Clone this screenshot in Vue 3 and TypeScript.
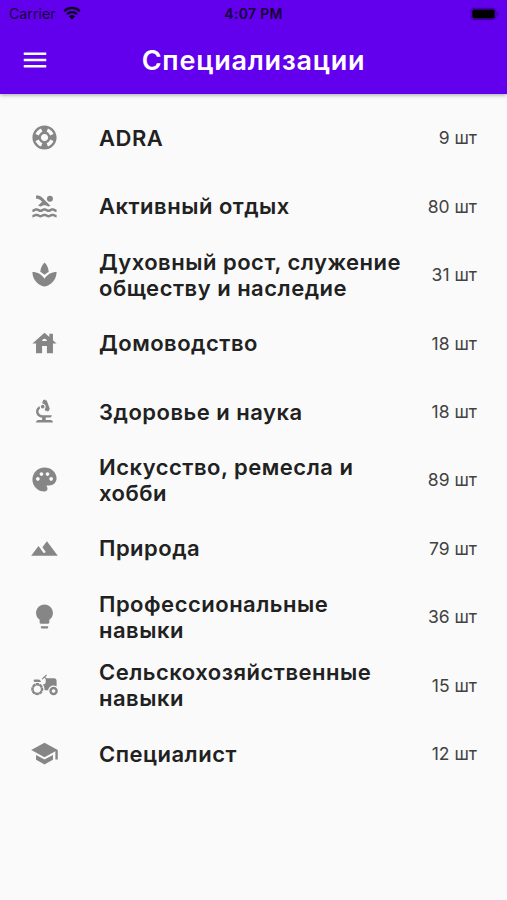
<script setup lang="ts">
interface Specialization {
  title: string
  count: number
  icon: string
}

const items: Specialization[] = [
  {
    title: 'ADRA',
    count: 9,
    icon: 'M12 2C6.48 2 2 6.48 2 12s4.48 10 10 10 10-4.48 10-10S17.52 2 12 2zm7.46 7.12l-2.78 1.15c-.51-1.36-1.58-2.44-2.95-2.94l1.15-2.78c2.1.8 3.77 2.47 4.58 4.57zM12 15c-1.66 0-3-1.34-3-3s1.34-3 3-3 3 1.34 3 3-1.34 3-3 3zM9.13 4.54l1.17 2.78c-1.38.5-2.47 1.59-2.98 2.97L4.54 9.13c.81-2.11 2.48-3.78 4.59-4.59zM4.54 14.87l2.78-1.15c.51 1.38 1.59 2.46 2.97 2.96l-1.17 2.78c-2.1-.81-3.77-2.48-4.58-4.59zm10.34 4.59l-1.15-2.78c1.37-.51 2.45-1.59 2.95-2.97l2.78 1.17c-.81 2.1-2.48 3.77-4.58 4.58z',
  },
  {
    title: 'Активный отдых',
    count: 80,
    icon: 'M22 21c-1.11 0-1.73-.37-2.18-.64-.37-.22-.6-.36-1.15-.36-.56 0-.78.13-1.15.36-.46.27-1.07.64-2.18.64s-1.73-.37-2.18-.64c-.37-.22-.6-.36-1.15-.36-.56 0-.78.13-1.15.36-.46.27-1.08.64-2.19.64-1.11 0-1.73-.37-2.18-.64-.37-.23-.6-.36-1.15-.36s-.78.13-1.15.36c-.46.27-1.08.64-2.19.64v-2c.56 0 .78-.13 1.15-.36.46-.27 1.08-.64 2.19-.64s1.73.37 2.18.64c.37.23.59.36 1.15.36.56 0 .78-.13 1.15-.36.46-.27 1.08-.64 2.19-.64 1.11 0 1.73.37 2.18.64.37.22.6.36 1.15.36s.78-.13 1.15-.36c.45-.27 1.07-.64 2.18-.64s1.73.37 2.18.64c.37.23.59.36 1.15.36v2zm0-4.5c-1.11 0-1.73-.37-2.18-.64-.37-.22-.6-.36-1.15-.36-.56 0-.78.13-1.15.36-.45.27-1.07.64-2.18.64s-1.73-.37-2.18-.64c-.37-.22-.6-.36-1.15-.36-.56 0-.78.13-1.15.36-.45.27-1.07.64-2.18.64s-1.73-.37-2.18-.64c-.37-.22-.6-.36-1.15-.36s-.78.13-1.15.36c-.47.27-1.09.64-2.2.64v-2c.56 0 .78-.13 1.15-.36.45-.27 1.07-.64 2.18-.64s1.73.37 2.18.64c.37.22.6.36 1.15.36.56 0 .78-.13 1.15-.36.45-.27 1.07-.64 2.18-.64s1.73.37 2.18.64c.37.22.6.36 1.15.36s.78-.13 1.15-.36c.45-.27 1.07-.64 2.18-.64s1.73.37 2.18.64c.37.22.6.36 1.15.36v2zM8.67 12c.56 0 .78-.13 1.15-.36.46-.27 1.08-.64 2.19-.64 1.11 0 1.73.37 2.18.64.37.22.6.36 1.15.36s.78-.13 1.15-.36c.12-.07.26-.15.41-.23L10.48 5C8.93 3.45 7.5 2.99 5 3v2.5c1.82-.01 2.89.39 4 1.5l1 1-3.25 3.25c.31.12.56.27.77.39.37.23.59.36 1.15.36zM19 5.5a2.5 2.5 0 1 1-5 0a2.5 2.5 0 1 1 5 0z',
  },
  {
    title: 'Духовный рост, служение обществу и наследие',
    count: 31,
    icon: 'M15.49 9.63c-.18-2.79-1.31-5.51-3.43-7.63-2.14 2.14-3.32 4.86-3.55 7.63 1.28.68 2.46 1.56 3.49 2.63 1.03-1.06 2.21-1.94 3.49-2.63zM12 15.45C9.85 12.17 6.18 10 2 10c0 5.32 3.36 9.82 8.03 11.49.63.23 1.29.4 1.97.51.68-.12 1.33-.29 1.97-.51C18.64 19.82 22 15.32 22 10c-4.18 0-7.85 2.17-10 5.45z',
  },
  {
    title: 'Домоводство',
    count: 18,
    icon: 'M19 9.3V4h-3v2.6L12 3 2 12h3v8h5v-6h4v6h5v-8h3l-3-2.7zm-9 .7c0-1.1.9-2 2-2s2 .9 2 2h-4z',
  },
  {
    title: 'Здоровье и наука',
    count: 18,
    icon: 'M7 19c-1.1 0-2 .9-2 2h14c0-1.1-.9-2-2-2h-4v-2h3c1.1 0 2-.9 2-2h-8c-1.66 0-3-1.34-3-3 0-1.09.59-2.04 1.46-2.56C8.17 9.03 8 8.54 8 8c0-.21.04-.42.09-.62C6.28 8.13 5 9.92 5 12c0 2.76 2.24 5 5 5v2H7zM10.56 5.51C11.91 5.54 13 6.64 13 8c0 .75-.33 1.41-.85 1.87l.59 1.62.94-.34.34.94 1.88-.68-.34-.94.94-.34-2.74-7.52-.94.34-.34-.94-1.88.68.34.94-.94.35.56 1.53zM12 8a1.5 1.5 0 1 1-3 0a1.5 1.5 0 1 1 3 0z',
  },
  {
    title: 'Искусство, ремесла и хобби',
    count: 89,
    icon: 'M12 2C6.49 2 2 6.49 2 12s4.49 10 10 10c1.38 0 2.5-1.12 2.5-2.5 0-.61-.23-1.2-.64-1.67-.08-.1-.13-.21-.13-.33 0-.28.22-.5.5-.5H16c3.31 0 6-2.69 6-6 0-4.96-4.49-9-10-9zm5.5 11c-.83 0-1.5-.67-1.5-1.5s.67-1.5 1.5-1.5 1.5.67 1.5 1.5-.67 1.5-1.5 1.5zm-3-4c-.83 0-1.5-.67-1.5-1.5S13.67 6 14.5 6s1.5.67 1.5 1.5S15.33 9 14.5 9zM5 11.5c0-.83.67-1.5 1.5-1.5s1.5.67 1.5 1.5S7.33 13 6.5 13 5 12.33 5 11.5zm6-4c0 .83-.67 1.5-1.5 1.5S8 8.33 8 7.5 8.67 6 9.5 6s1.5.67 1.5 1.5z',
  },
  {
    title: 'Природа',
    count: 79,
    icon: 'M14 6l-3.75 5 2.85 3.8-1.6 1.2C9.81 13.75 7 10 7 10l-6 8h22L14 6z',
  },
  {
    title: 'Профессиональные навыки',
    count: 36,
    icon: 'M9 21c0 .5.4 1 1 1h4c.6 0 1-.5 1-1v-1H9v1zm3-19C8.1 2 5 5.1 5 9c0 2.4 1.2 4.5 3 5.7V17c0 .5.4 1 1 1h6c.6 0 1-.5 1-1v-2.3c1.8-1.3 3-3.4 3-5.7 0-3.9-3.1-7-7-7z',
  },
  {
    title: 'Сельскохозяйственные навыки',
    count: 15,
    icon: 'M19.5 12c.93 0 1.78.28 2.5.76V8c0-1.1-.9-2-2-2h-6.29l-1.06-1.06 1.41-1.41-.71-.71-3.53 3.53.71.71 1.41-1.41L13 6.71V9c0 1.1-.9 2-2 2h-.54c.95 1.06 1.54 2.46 1.54 4 0 .34-.04.67-.09 1h3.14c.25-2.25 2.14-4 4.45-4zM19.5 13c-1.93 0-3.5 1.57-3.5 3.5s1.57 3.5 3.5 3.5 3.5-1.57 3.5-3.5-1.57-3.5-3.5-3.5zm0 5c-.83 0-1.5-.67-1.5-1.5s.67-1.5 1.5-1.5 1.5.67 1.5 1.5-.67 1.5-1.5 1.5zM4 9h5c0-1.1-.9-2-2-2H4c-.55 0-1 .45-1 1s.45 1 1 1zM9.83 13.82l-.18-.47L10.58 13c-.46-1.06-1.28-1.91-2.31-2.43l-.4.89-.46-.21.4-.9C7.26 10.13 6.64 10 6 10c-.53 0-1.04.11-1.52.26l.34.91-.47.18L4 10.42c-1.06.46-1.91 1.28-2.43 2.31l.89.4-.21.46-.9-.4C1.13 13.74 1 14.36 1 15c0 .53.11 1.04.26 1.52l.91-.34.18.47-.93.35c.46 1.06 1.28 1.91 2.31 2.43l.4-.89.46.21-.4.9c.57.22 1.17.35 1.81.35.53 0 1.04-.11 1.52-.26l-.34-.91.47-.18.35.93c1.06-.46 1.91-1.28 2.43-2.31l-.89-.4.21-.46.9.4c.22-.57.35-1.17.35-1.81 0-.53-.11-1.04-.26-1.52l-.91.34zM7.15 17.77c-1.53.63-3.29-.09-3.92-1.62-.63-1.53.09-3.29 1.62-3.92 1.53-.63 3.29.09 3.92 1.62.64 1.53-.09 3.28-1.62 3.92z',
  },
  {
    title: 'Специалист',
    count: 12,
    icon: 'M5 13.18v4L12 21l7-3.82v-4L12 17l-7-3.82zM12 3L1 9l11 6 9-4.91V17h2V9L12 3z',
  },
]
</script>

<template>
  <div class="screen">
    <header class="header">
      <div class="status">
        <div class="carrier">
          <span>Carrier</span>
          <svg class="wifi" viewBox="0 0 18 14">
            <path d="M1.2 5.1a11.2 11.2 0 0 1 15.6 0" />
            <path d="M4 8.1a7.2 7.2 0 0 1 10 0" />
            <path class="dot" d="M9 13.5L5.9 10.4a4.4 4.4 0 0 1 6.2 0z" />
          </svg>
        </div>
        <span class="time">4:07 PM</span>
        <svg class="battery" viewBox="0 0 30 14">
          <rect class="shell" x="1" y="1.3" width="25" height="11.4" rx="3" />
          <rect x="2.3" y="2.6" width="22.4" height="8.8" rx="1.6" />
          <path class="cap" d="M27.3 5v4c1.9-.7 1.9-3.3 0-4z" />
        </svg>
      </div>
      <div class="toolbar">
        <button class="menu" type="button">
          <svg viewBox="0 0 24 24"><path d="M3 18h18v-2H3v2zm0-5h18v-2H3v2zm0-7v2h18V6H3z" /></svg>
        </button>
        <h1 class="title">Специализации</h1>
      </div>
    </header>
    <ul class="list">
      <li v-for="item in items" :key="item.title" class="row">
        <svg class="icon" viewBox="0 0 24 24"><path :d="item.icon" /></svg>
        <span class="name">{{ item.title }}</span>
        <span class="count">{{ item.count }} шт</span>
      </li>
    </ul>
  </div>
</template>

<style>
body {
  background: #fafafa;
}
</style>

<style scoped>
.screen {
  min-height: 900px;
  background: #fafafa;
  font-family: Inter, "Liberation Sans", sans-serif;
  color: #212121;
}
.header {
  height: 93.5px;
  background: #6200ee;
  box-shadow: 0 1px 4px rgba(0, 0, 0, 0.35);
}
.status {
  display: grid;
  grid-template-columns: 1fr auto 1fr;
  align-items: center;
  height: 27px;
  padding: 0 7px 0 9px;
  font-size: 14.2px;
  color: #150035;
}
.carrier {
  display: flex;
  align-items: center;
  gap: 7px;
}
.wifi {
  width: 18px;
  height: 14px;
  margin-top: -2px;
  fill: none;
  stroke: #0b001c;
  stroke-width: 2.3;
}
.wifi .dot {
  fill: #0b001c;
  stroke: none;
}
.time {
  margin-right: 2px;
  font-size: 14px;
  font-weight: 600;
  letter-spacing: 0.3px;
}
.battery {
  justify-self: end;
  width: 30px;
  height: 14px;
  fill: #000;
}
.battery .shell {
  fill: none;
  stroke: #3d0096;
  stroke-width: 1;
}
.battery .cap {
  fill: #3d0096;
}
.toolbar {
  display: grid;
  grid-template-columns: 50px 1fr 50px;
  align-items: center;
  height: 66px;
  padding: 0 20px;
}
.menu {
  display: flex;
  width: 30px;
  height: 30px;
  padding: 0;
  border: 0;
  background: none;
}
.menu svg {
  width: 30px;
  height: 30px;
  fill: #fff;
}
.title {
  margin: 0;
  padding-top: 1px;
  text-align: center;
  font-size: 27px;
  font-weight: 600;
  line-height: 32px;
  letter-spacing: 0.78px;
  color: #fff;
}
.list {
  margin: 0;
  padding: 10.3px 30px 0;
  list-style: none;
}
.row {
  display: flex;
  align-items: center;
  height: 68.4px;
}
.icon {
  flex: none;
  width: 29px;
  height: 29px;
  margin-left: 0.4px;
  margin-right: 39.6px;
  fill: #868686;
}
.name {
  flex: 1;
  padding-top: 1.6px;
  font-size: 22px;
  font-weight: 600;
  line-height: 25.6px;
  letter-spacing: 0.5px;
}
.count {
  flex: none;
  margin-left: 16px;
  font-size: 17.5px;
  color: #424242;
}
</style>
